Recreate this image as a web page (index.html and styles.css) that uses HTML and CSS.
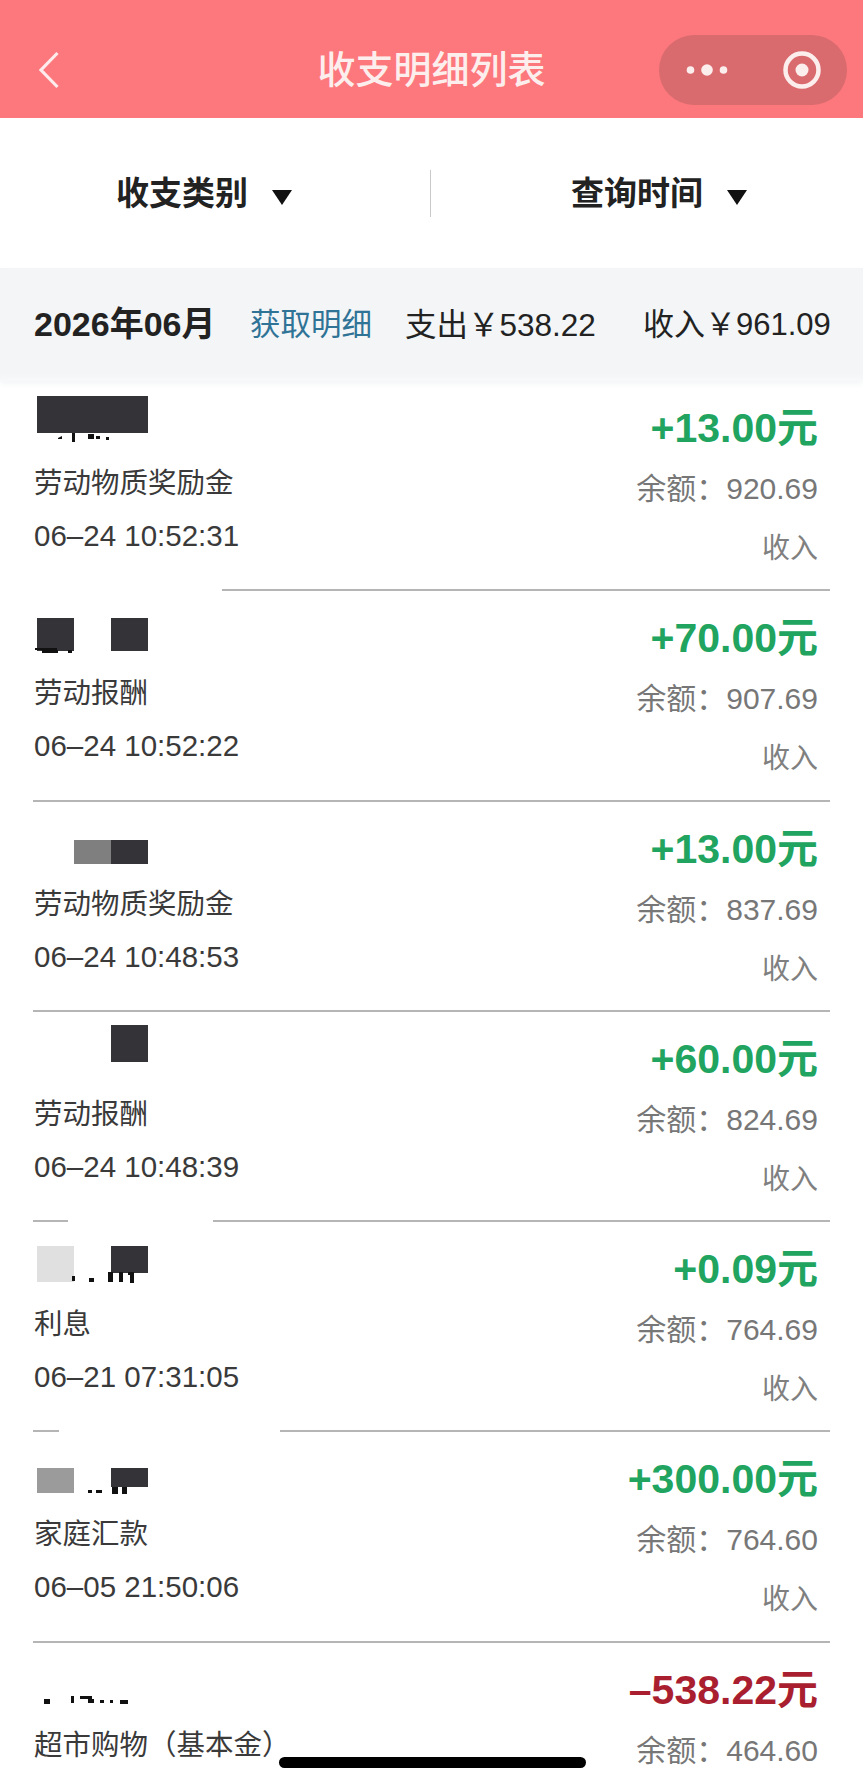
FILE: index.html
```html
<!DOCTYPE html>
<html lang="zh-CN">
<head>
<meta charset="utf-8">
<title>收支明细列表</title>
<link rel="stylesheet" href="styles.css">
</head>
<body>
<header class="nav">
  <svg class="back" viewBox="0 0 22 38"><path d="M19.5 2 3 19l16.500 17"/></svg>
  <h1 class="title">收支明细列表</h1>
  <div class="capsule">
    <svg class="dots" viewBox="0 0 42 14"><circle cx="4.500" cy="7" r="3.800"/><circle cx="21" cy="7" r="5.800"/><circle cx="37.500" cy="7" r="3.800"/></svg>
    <svg class="target" viewBox="0 0 38 38"><circle class="ring" cx="19" cy="19" r="16.500"/><circle cx="19" cy="19" r="6.500"/></svg>
  </div>
</header>

<section class="filters">
  <div class="filter filter-left"><span>收支类别</span><i class="caret"></i></div>
  <div class="filter filter-right"><span>查询时间</span><i class="caret"></i></div>
</section>

<section class="summary">
  <strong class="month">2026年06月</strong>
  <a class="fetch">获取明细</a>
  <span class="out">支出￥538.22</span>
  <span class="in">收入￥961.09</span>
</section>

<main class="list">
  <article class="row">
    <div class="left">
      <svg class="mask" viewBox="0 0 115 50"><rect class="dark" x="3" y="3" width="111" height="37"/><path class="frag" d="M24 45l4-2v3h-4zM38 40h3v9h-3zM54 41h6v5h-6zM62 43h4v3h-4zM72 44h3v3h-3z"/></svg>
      <p class="label">劳动物质奖励金</p>
      <p class="time">06–24 10:52:31</p>
    </div>
    <div class="right">
      <p class="amount plus">+13.00元</p>
      <p class="balance">余额：920.69</p>
      <p class="type">收入</p>
    </div>
  </article>
  <div class="sep"><i class="gap gap-first"></i><i class="line"></i></div>

  <article class="row">
    <div class="left">
      <svg class="mask" viewBox="0 0 115 50"><rect class="dark" x="3" y="15" width="37" height="33"/><rect class="dark" x="77" y="15" width="37" height="33"/><path class="frag" d="M1 45h22v2h-22zM8 47h16v3h-16zM34 47h4v3h-4z"/></svg>
      <p class="label">劳动报酬</p>
      <p class="time">06–24 10:52:22</p>
    </div>
    <div class="right">
      <p class="amount plus">+70.00元</p>
      <p class="balance">余额：907.69</p>
      <p class="type">收入</p>
    </div>
  </article>
  <div class="sep"><i class="line"></i></div>

  <article class="row">
    <div class="left">
      <svg class="mask" viewBox="0 0 115 50"><rect class="mid" x="40" y="26" width="37" height="24"/><rect class="dark" x="77" y="26" width="37" height="24"/></svg>
      <p class="label">劳动物质奖励金</p>
      <p class="time">06–24 10:48:53</p>
    </div>
    <div class="right">
      <p class="amount plus">+13.00元</p>
      <p class="balance">余额：837.69</p>
      <p class="type">收入</p>
    </div>
  </article>
  <div class="sep"><i class="line"></i></div>

  <article class="row">
    <div class="left">
      <svg class="mask" viewBox="0 0 115 50"><rect class="dark" x="77" y="1" width="37" height="37"/></svg>
      <p class="label">劳动报酬</p>
      <p class="time">06–24 10:48:39</p>
    </div>
    <div class="right">
      <p class="amount plus">+60.00元</p>
      <p class="balance">余额：824.69</p>
      <p class="type">收入</p>
    </div>
  </article>
  <div class="sep"><i class="dash dash-long"></i><i class="gap gap-fifth"></i><i class="line"></i></div>

  <article class="row">
    <div class="left">
      <svg class="mask" viewBox="0 0 115 50"><rect class="pale" x="3" y="12" width="37" height="36"/><rect class="dark" x="77" y="12" width="37" height="27"/><path class="frag" d="M38 42h3v5h-3zM55 44h5v4h-5zM74 38h5v10h-5zM85 38h4v10h-4zM94 38h6v3h-6zM96 41h4v8h-4z"/></svg>
      <p class="label">利息</p>
      <p class="time">06–21 07:31:05</p>
    </div>
    <div class="right">
      <p class="amount plus">+0.09元</p>
      <p class="balance">余额：764.69</p>
      <p class="type">收入</p>
    </div>
  </article>
  <div class="sep"><i class="dash"></i><i class="gap gap-sixth"></i><i class="line"></i></div>

  <article class="row">
    <div class="left">
      <svg class="mask" viewBox="0 0 115 50"><rect class="soft" x="3" y="24" width="37" height="25"/><rect class="dark" x="77" y="24" width="37" height="19"/><path class="frag" d="M54 46h4v3h-4zM62 46h6v3h-6zM78 43h6v7h-6zM88 43h5v7h-5z"/></svg>
      <p class="label">家庭汇款</p>
      <p class="time">06–05 21:50:06</p>
    </div>
    <div class="right">
      <p class="amount plus">+300.00元</p>
      <p class="balance">余额：764.60</p>
      <p class="type">收入</p>
    </div>
  </article>
  <div class="sep"><i class="line"></i></div>

  <article class="row">
    <div class="left">
      <svg class="mask" viewBox="0 0 115 50"><path class="frag" d="M10 44h6v5h-6zM37 41h3v7h-3zM46 41h12v3h-12zM54 44h6v4h-6zM66 45h4v3h-4zM76 45h3v3h-3zM86 45h8v4h-8z"/></svg>
      <p class="label">超市购物（基本金）</p>
    </div>
    <div class="right">
      <p class="amount minus">–538.22元</p>
      <p class="balance">余额：464.60</p>
    </div>
  </article>
</main>

<div class="home"></div>
</body>
</html>
```

FILE: styles.css
```css
* { box-sizing: border-box; }
html, body { margin: 0; padding: 0; height: 1786px; overflow: hidden; background: #fff; }
body {
  position: relative;
  font-family: "Liberation Sans", "Noto Sans CJK SC", sans-serif;
  color: #222;
}
p, h1 { margin: 0; font-weight: 400; }

.nav {
  height: 118px;
  padding: 35px 16px 13px;
  background: #fd787d;
  display: grid;
  grid-template-columns: 1fr auto 1fr;
  align-items: center;
}
.back { width: 22px; height: 38px; margin-left: 22px; fill: none; stroke: #fdeceb; stroke-width: 3.200; }
.title {
  font-size: 38px;
  line-height: 70px;
  color: #fdeeee;
  font-weight: 500;
}
.capsule {
  justify-self: end;
  width: 188px;
  height: 70px;
  border-radius: 35px;
  background: #d96b6e;
  display: flex;
  align-items: center;
  padding: 0 26px 0 27px;
  justify-content: space-between;
}
.dots { width: 42px; height: 14px; fill: #fdeeee; }
.target { width: 38px; height: 38px; fill: #fdeeee; }
.target .ring { fill: none; stroke: #fdeeee; stroke-width: 4.500; }

.filters {
  height: 150px;
  display: grid;
  grid-template-columns: 431px 1fr;
  align-items: center;
}
.filter {
  display: flex;
  align-items: center;
  justify-content: center;
  gap: 24px;
  height: 47px;
  font-size: 33px;
  font-weight: 700;
  color: #222;
}
.filter span { margin-bottom: 4px; }
.filter-left { padding-right: 22px; border-right: 1px solid #c9c9c9; }
.filter-right { padding-left: 24px; }
.caret {
  width: 0;
  height: 0;
  margin-top: 8px;
  border-left: 10.500px solid transparent;
  border-right: 10.500px solid transparent;
  border-top: 15px solid #111;
}

.summary {
  height: 113px;
  padding: 0 0 6px 34px;
  background: linear-gradient(#f3f5f6 94%, #f8f9fa);
  box-shadow: 0 3px 6px #f3f5f6;
  display: flex;
  align-items: center;
  font-size: 31px;
  color: #222;
  white-space: nowrap;
}
.month { width: 216px; font-size: 34px; font-weight: 700; }
.fetch { width: 155px; font-size: 30.500px; color: #2f7396; }
.out { width: 238px; font-size: 31.500px; }

.row {
  height: 208.250px;
  padding: 0 45px 0 34px;
  display: flex;
  justify-content: space-between;
}
.left { padding-top: 12px; }
.mask { display: block; width: 115px; height: 50px; margin-bottom: 14px; }
.dark { fill: #343438; }
.mid { fill: #7f7f7f; }
.pale { fill: #e0e0e0; }
.soft { fill: #9b9b9b; }
.frag { fill: #111; }
.label { font-size: 28.500px; line-height: 52px; color: #3a3a3a; }
.time { font-size: 29.500px; line-height: 53px; color: #3a3a3a; }

.right { padding-top: 17px; text-align: right; }
.amount { font-size: 41px; line-height: 60px; font-weight: 700; }
.plus { color: #20a45f; }
.minus { color: #a91f30; }
.balance { font-size: 30px; line-height: 62px; color: #777; }
.type { font-size: 28px; line-height: 58px; color: #808080; }

.sep {
  display: flex;
  height: 2px;
  margin: 0 33px;
}
.line { flex: 1; background: #b5b5b5; }
.dash { width: 26px; background: #b5b5b5; }
.dash-long { width: 35px; }
.gap-first { width: 189px; }
.gap-fifth { width: 145px; }
.gap-sixth { width: 221px; }

.home {
  position: absolute;
  left: 279px;
  top: 1757px;
  width: 307px;
  height: 11px;
  border-radius: 6px;
  background: #000;
}
```
